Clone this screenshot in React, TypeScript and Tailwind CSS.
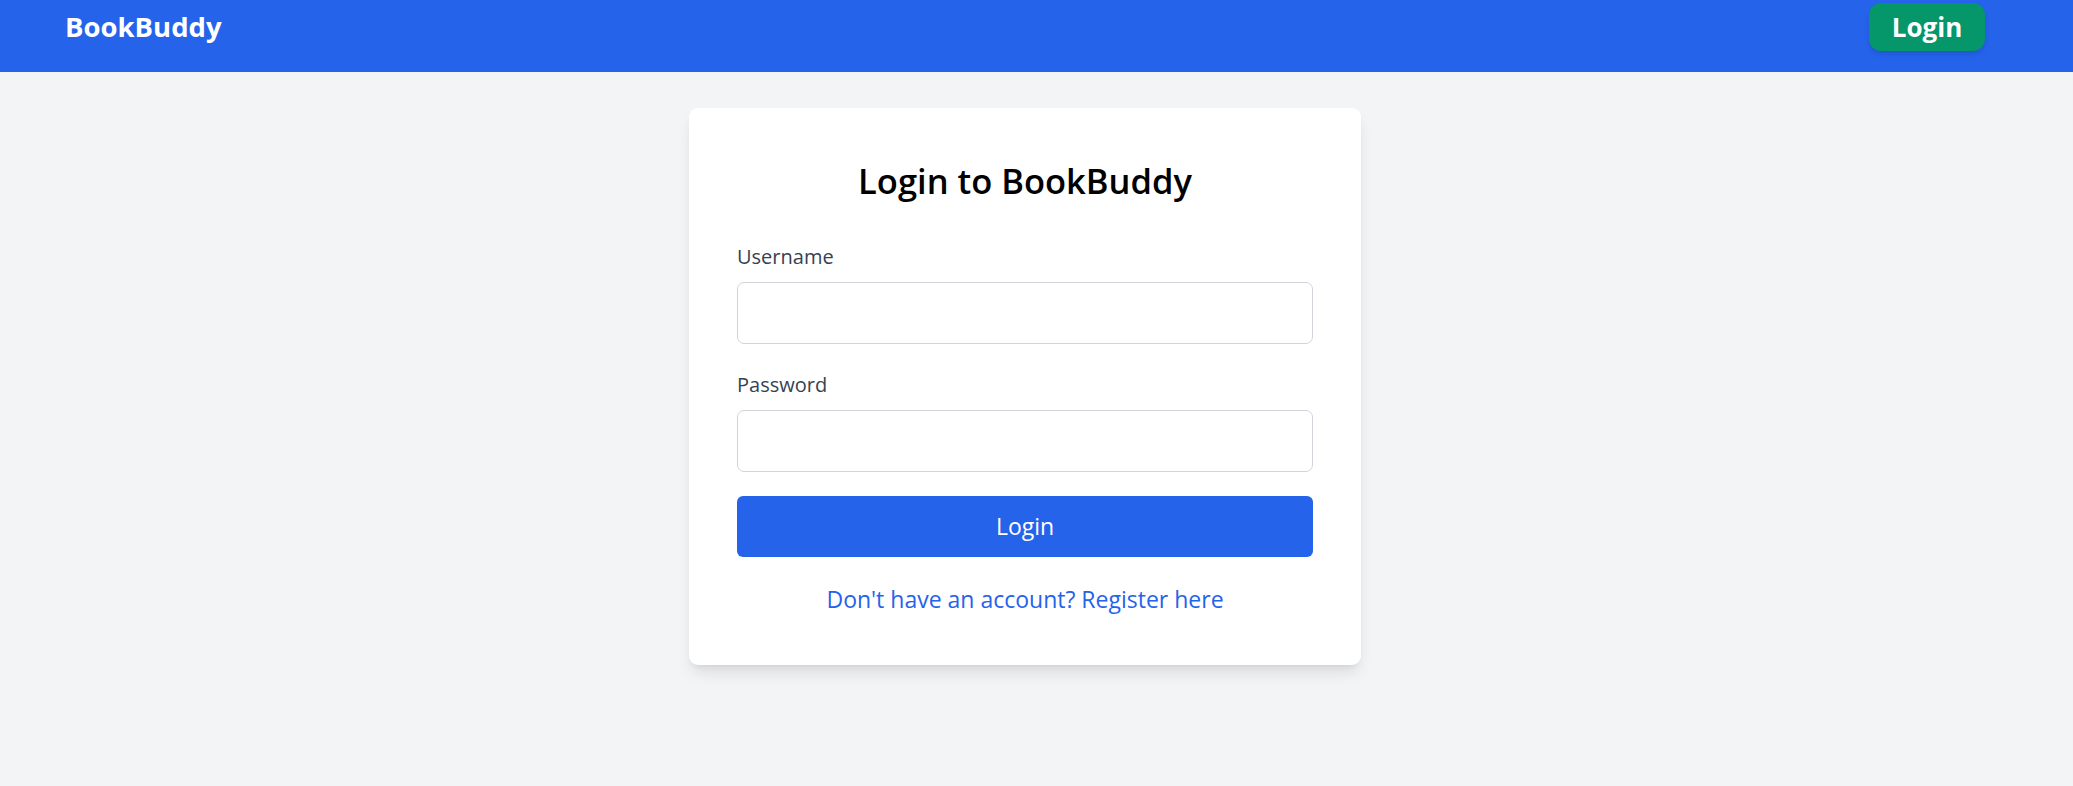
import React from "react";

const font = { fontFamily: '"Open Sans", "Noto Sans", sans-serif' };

function Navbar() {
  return (
    <nav className="flex h-[72px] items-start justify-between bg-[#2563eb] pl-[65px] pr-[88px] pt-[3px]">
      <div className="flex h-[48px] items-center">
        <span className="text-[27.5px] font-bold text-white">BookBuddy</span>
      </div>
      <button className="flex h-[48px] w-[116px] items-center justify-center rounded-[12px] bg-[#059669] text-[26px] font-bold text-white shadow-md">
        Login
      </button>
    </nav>
  );
}

function Field({ label, type }: { label: string; type: string }) {
  return (
    <div className="mb-[24px]">
      <label className="mb-[10px] block pt-[2px] text-[20px] leading-[30px] font-medium text-[#374151]">{label}</label>
      <input
        type={type}
        className="block h-[62px] w-full rounded-[7px] border border-[#d1d5db] bg-white px-[18px] text-[23px] outline-none"
      />
    </div>
  );
}

export default function App() {
  return (
    <div className="min-h-screen bg-[#f3f4f6]" style={font}>
      <Navbar />
      <main className="flex justify-center pt-[36px] pr-[23px]">
        <div className="w-[672px] rounded-[9px] bg-white p-[48px] shadow-lg">
          <h1 className="mb-[35px] pt-[1px] text-center text-[34.5px] leading-[48px] font-semibold text-black">
            Login to BookBuddy
          </h1>
          <Field label="Username" type="text" />
          <Field label="Password" type="password" />
          <button className="block h-[61px] w-full rounded-[6px] bg-[#2563eb] text-[23px] text-white">
            Login
          </button>
          <p className="mt-[24px] text-center text-[23px] leading-[36px] text-[#2563eb]">
            Don't have an account? Register here
          </p>
        </div>
      </main>
    </div>
  );
}
